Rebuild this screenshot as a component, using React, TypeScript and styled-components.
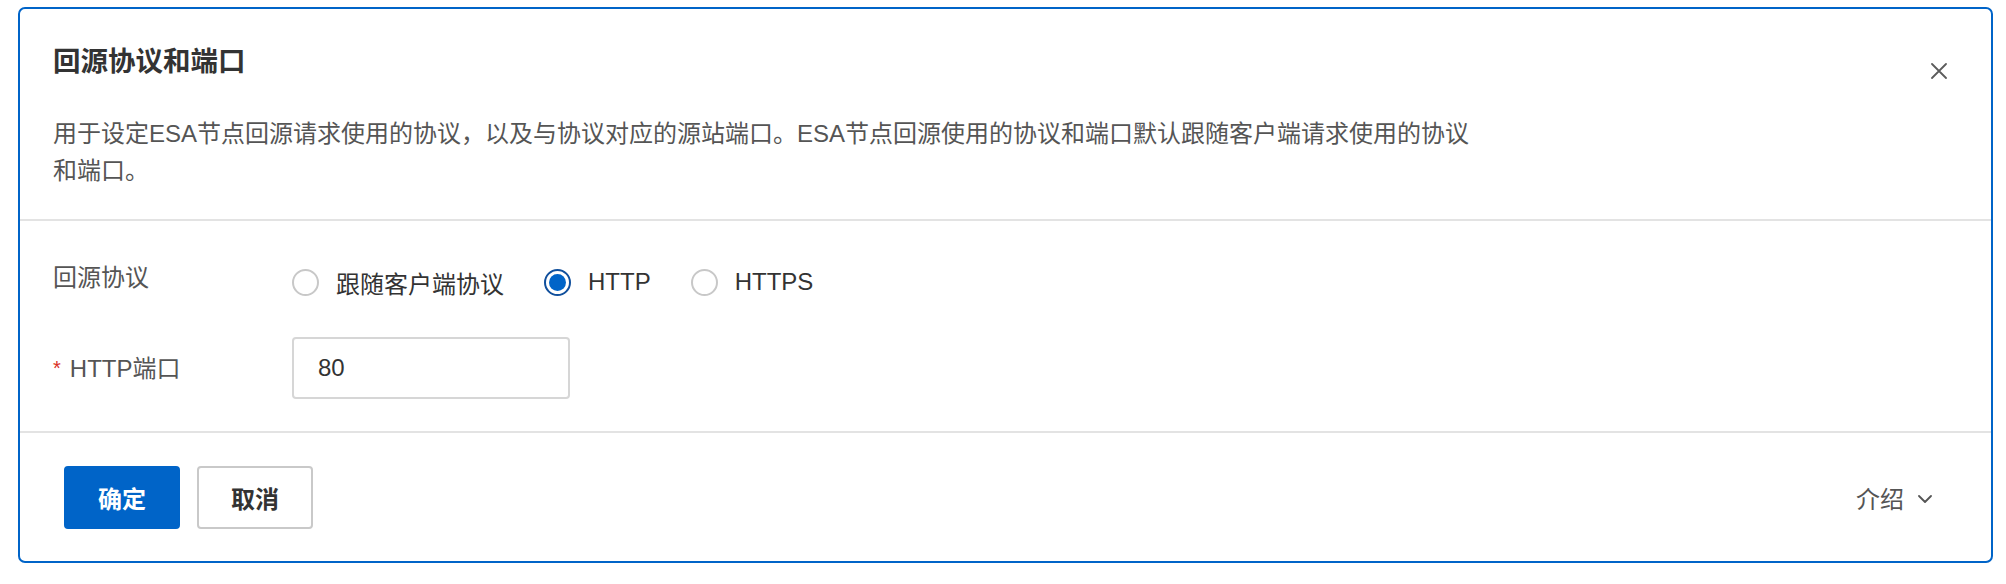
import styled, { createGlobalStyle } from "styled-components";

const GlobalStyle = createGlobalStyle`
  html, body {
    margin: 0;
    padding: 0;
    background: #ffffff;
  }
  body {
    font-family: "Liberation Sans", "Noto Sans CJK SC", sans-serif;
    color: #333333;
  }
`;

const Page = styled.div`
  padding: 7px 13px 0 18px;
`;

const Panel = styled.section`
  box-sizing: border-box;
  width: 1975px;
  height: 556px;
  border: 2px solid #0064c8;
  border-radius: 7px;
  background: #ffffff;
  display: flex;
  flex-direction: column;
`;

const Header = styled.header`
  padding: 34px 44px 30px 33px;
  border-bottom: 2px solid #e3e3e3;
`;

const TitleRow = styled.div`
  display: flex;
  justify-content: space-between;
  align-items: flex-start;
`;

const Title = styled.h2`
  margin: 0;
  font-size: 27.5px;
  line-height: 38px;
  font-weight: 600;
  color: #333333;
`;

const CloseButton = styled.button`
  margin-top: 20px;
  padding: 0;
  width: 16px;
  height: 16px;
  border: none;
  background: none;
  display: flex;
  cursor: pointer;
`;

const Description = styled.p`
  margin: 34px 0 0;
  font-size: 24px;
  line-height: 37px;
  color: #555555;
`;

const Body = styled.div`
  padding: 41px 0 32px 33px;
  border-bottom: 2px solid #e3e3e3;
  display: flex;
  flex-direction: column;
  gap: 35px;
`;

const FieldRow = styled.div<{ $top?: boolean }>`
  display: flex;
  align-items: ${({ $top }) => ($top ? "flex-start" : "center")};
`;

const FieldLabel = styled.div`
  width: 239px;
  font-size: 24px;
  line-height: 32px;
  color: #555555;
`;

const Required = styled.span`
  color: #d93026;
  font-size: 20px;
  margin-right: 9px;
  vertical-align: 2px;
`;

const RadioGroup = styled.div`
  display: flex;
  align-items: center;
  height: 40px;
`;

const RadioOption = styled.label`
  display: inline-flex;
  align-items: center;
  gap: 17px;
  margin-right: 40px;
  font-size: 24px;
  color: #333333;
  cursor: pointer;
`;

const RadioCircle = styled.span<{ $checked?: boolean }>`
  box-sizing: border-box;
  width: 27px;
  height: 27px;
  border-radius: 50%;
  border: ${({ $checked }) =>
    $checked ? "2.5px solid #104f9c" : "2px solid #c8c8c8"};
  background: #ffffff;
  display: flex;
  align-items: center;
  justify-content: center;

  &::after {
    content: "";
    display: ${({ $checked }) => ($checked ? "block" : "none")};
    width: 17px;
    height: 17px;
    border-radius: 50%;
    background: #0064c8;
  }
`;

const TextInput = styled.input`
  box-sizing: border-box;
  width: 278px;
  height: 62px;
  border: 2px solid #d6d6d6;
  border-radius: 4px;
  padding: 0 24px;
  font-family: inherit;
  font-size: 24px;
  color: #333333;
  outline: none;
`;

const Footer = styled.footer`
  flex: 1;
  display: flex;
  justify-content: space-between;
  align-items: center;
  padding: 0 59px 0 44px;
`;

const ButtonGroup = styled.div`
  display: flex;
  gap: 17px;
`;

const Button = styled.button<{ $primary?: boolean }>`
  box-sizing: border-box;
  width: 116px;
  height: 63px;
  border-radius: 4px;
  border: 2px solid ${({ $primary }) => ($primary ? "#0064c8" : "#c9c9c9")};
  background: ${({ $primary }) => ($primary ? "#0064c8" : "#ffffff")};
  color: ${({ $primary }) => ($primary ? "#ffffff" : "#333333")};
  font-family: inherit;
  font-size: 24px;
  font-weight: 600;
  cursor: pointer;
`;

const IntroToggle = styled.button`
  display: flex;
  align-items: center;
  gap: 14px;
  padding: 0;
  border: none;
  background: none;
  font-family: inherit;
  font-size: 24px;
  color: #555555;
  cursor: pointer;

  svg {
    margin-top: 3px;
  }
`;

const protocols = [
  { key: "follow", label: "跟随客户端协议" },
  { key: "http", label: "HTTP" },
  { key: "https", label: "HTTPS" },
];

export default function App() {
  const selected = "http";

  return (
    <>
      <GlobalStyle />
      <Page>
        <Panel>
          <Header>
            <TitleRow>
              <Title>回源协议和端口</Title>
              <CloseButton aria-label="关闭">
                <svg width="16" height="16" viewBox="0 0 16 16">
                  <path
                    d="M1 1 L15 15 M15 1 L1 15"
                    stroke="#5c5c5c"
                    strokeWidth="1.8"
                    strokeLinecap="round"
                  />
                </svg>
              </CloseButton>
            </TitleRow>
            <Description>
              用于设定ESA节点回源请求使用的协议，以及与协议对应的源站端口。ESA节点回源使用的协议和端口默认跟随客户端请求使用的协议
              <br />
              和端口。
            </Description>
          </Header>
          <Body>
            <FieldRow $top>
              <FieldLabel>回源协议</FieldLabel>
              <RadioGroup>
                {protocols.map((p) => (
                  <RadioOption key={p.key}>
                    <RadioCircle $checked={p.key === selected} />
                    {p.label}
                  </RadioOption>
                ))}
              </RadioGroup>
            </FieldRow>
            <FieldRow>
              <FieldLabel>
                <Required>*</Required>HTTP端口
              </FieldLabel>
              <TextInput defaultValue="80" />
            </FieldRow>
          </Body>
          <Footer>
            <ButtonGroup>
              <Button $primary>确定</Button>
              <Button>取消</Button>
            </ButtonGroup>
            <IntroToggle>
              介绍
              <svg width="14" height="8" viewBox="0 0 14 8">
                <path
                  d="M1 1 L7 7 L13 1"
                  fill="none"
                  stroke="#555555"
                  strokeWidth="1.8"
                  strokeLinecap="round"
                  strokeLinejoin="round"
                />
              </svg>
            </IntroToggle>
          </Footer>
        </Panel>
      </Page>
    </>
  );
}
